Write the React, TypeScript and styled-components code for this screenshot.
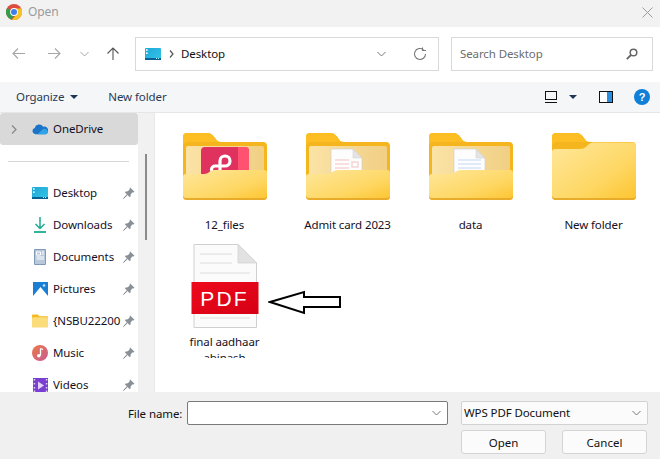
import React from "react";
import styled, { createGlobalStyle } from "styled-components";

const Global = createGlobalStyle`
  html, body { margin: 0; padding: 0; background: #fff; }
  * { box-sizing: border-box; }
  body { font-family: "Noto Sans", "Open Sans", sans-serif; font-size: 11.5px; letter-spacing: -0.1px; color: #111; }
`;
const Dialog = styled.div`
  width: 660px; height: 459px; display: flex; flex-direction: column; overflow: hidden; position: relative;
`;
const TitleBar = styled.header`
  height: 27px; background: #f2f2f2; display: flex; align-items: center; padding: 0 7px 3px 6px; gap: 6px; flex: none;
`;
const Title = styled.span`color: #9a9a9a; font-size: 12px; flex: 1; margin-top: -1px;`;
const NavBar = styled.nav`
  height: 55px; flex: none; display: flex; align-items: flex-start; padding: 10px 7px 0 0; background: #fff;
`;
const NavIcons = styled.div`width: 135px; height: 33px; flex: none; display: flex; align-items: center; padding-left: 12px;`;
const NavIcon = styled.svg<{ $gap: number }>`margin-right: ${p => p.$gap}px; flex: none;`;
const Field = styled.div<{ $grow?: boolean }>`
  height: 34px; border: 1px solid #d9d9d9; display: flex; align-items: center; background: #fff;
  ${p => (p.$grow ? "width: 304px; margin-right: 12px; padding: 0 11px 1px 9px;" : "width: 202px; padding: 0 14px 1px 8px;")}
`;
const Crumb = styled.span`flex: 1; margin-left: 7px; color: #111;`;
const Hint = styled.span`flex: 1; color: #6d6d6d;`;
const ToolBar = styled.div`
  height: 31px; flex: none; background: #f5f6f7; border-bottom: 1px solid #e6e6e6; display: flex; align-items: center; padding: 0 10px 1px 16px;
`;
const ToolButton = styled.span`color: #2a3b55; display: flex; align-items: center; gap: 6px; margin-right: 30px;`;
const Spacer = styled.div`flex: 1;`;
const Caret = styled.i`display: block; width: 0; height: 0; border: 4px solid transparent; border-top: 4px solid #1f3556; border-bottom: 0;`;
const ToolIcon = styled.svg<{ $gap: number }>`margin-right: ${p => p.$gap}px; flex: none;`;
const Main = styled.main`flex: 1; min-height: 0; display: flex; background: #fff;`;
const Sidebar = styled.aside`width: 138px; flex: none; overflow: hidden;`;
const Row = styled.div<{ $active?: boolean }>`
  height: 32px; display: flex; align-items: center; border-radius: 3px;
  background: ${p => (p.$active ? "#d9d9d9" : "transparent")};
  padding-left: ${p => (p.$active ? 11 : 32)}px; padding-right: 3px; flex: none;
`;
const RowIcon = styled.span`width: 16px; height: 16px; flex: none; display: flex; align-items: center; justify-content: center; margin-right: 5px;`;
const RowLabel = styled.span`width: 68px; flex: none; overflow: hidden; white-space: nowrap; color: #15101f; margin-right: 2px; margin-top: -1px;`;
const Rule = styled.div`height: 32px; display: flex; align-items: center; padding: 0 9px 0 8px;`;
const RuleLine = styled.div`height: 1px; width: 100%; background: #d6d6d6;`;
const Gutter = styled.div`width: 17px; flex: none; background: #f1f1f1; border-right: 1px solid #e8e8e8; padding: 41px 0 0 7px;`;
const Thumb = styled.div`width: 2px; height: 86px; background: #8b8b8b;`;
const Files = styled.section`flex: 1; position: relative; display: grid; grid-template-columns: repeat(4, 123px); grid-template-rows: 120px 147px; padding: 0 0 0 8px; overflow: hidden; align-content: start;`;
const Tile = styled.div<{ $doc?: boolean }>`
  display: flex; flex-direction: column; align-items: center; text-align: center; width: 123px; overflow: hidden;
  padding-top: ${p => (p.$doc ? 11 : 20)}px;
  height: ${p => (p.$doc ? 125 : 120)}px;
`;
const TileLabel = styled.div<{ $doc?: boolean }>`
  margin-top: ${p => (p.$doc ? 6 : 17)}px; line-height: 16px; width: ${p => (p.$doc ? 80 : 120)}px; color: #15101f;
`;
const Arrow = styled.svg`position: absolute; left: 113px; top: 177px;`;
const Footer = styled.footer`
  height: 67px; flex: none; background: #f0f0f0; padding: 9px 12px 0 128px; display: grid;
  grid-template-columns: 59px 261px 13px 187px; grid-template-rows: 24px 24px; row-gap: 5px; align-items: center;
`;
const FieldLabel = styled.label`color: #111;`;
const Combo = styled.div<{ $dark?: boolean }>`
  height: 24px; background: ${p => (p.$dark ? "#fff" : "#fbfbfb")}; border: 1px solid ${p => (p.$dark ? "#7a7a7a" : "#d2d2d2")}; border-radius: 2px;
  display: flex; align-items: center; padding: 0 6px 1px 2px; grid-column: ${p => (p.$dark ? 2 : 4)};
`;
const ComboText = styled.span`flex: 1; color: #111;`;
const Buttons = styled.div`grid-column: 4; grid-row: 2; display: flex; justify-content: space-between; padding: 0 1px 0 0;`;
const Button = styled.button`
  width: 85px; height: 24px; border: 1px solid #d4d4d4; border-radius: 3px; background: #fbfbfb; color: #111; font: inherit; padding: 0;
`;

const Chrome = () => (
  <svg width="16" height="16" viewBox="0 0 16 16">
    <circle cx="8" cy="8" r="8" fill="#dd4b3e" />
    <path d="M8 8 1.1 4A8 8 0 0 0 6 15.8L8 8Z" fill="#2f9e4f" />
    <path d="M8 4.5h7.2A8 8 0 0 1 6 15.8l5-6.2L8 8Z" fill="#f7c325" />
    <circle cx="8" cy="8" r="3.9" fill="#fff" />
    <circle cx="8" cy="8" r="3" fill="#3f7ee8" />
  </svg>
);
const DesktopIcon = () => (
  <svg width="16" height="12" viewBox="0 0 16 12">
    <defs><linearGradient id="dk" x1="0" y1="0" x2="1" y2="1"><stop offset="0" stopColor="#1ea7d8" /><stop offset="1" stopColor="#35c6e6" /></linearGradient></defs>
    <rect width="16" height="12" rx="1" fill="url(#dk)" />
    <rect y="10" width="16" height="2" fill="#0a5f93" />
    <rect x="1" y="1.2" width="1.6" height="1.6" fill="#fff" /><rect x="1" y="4.4" width="1.6" height="1.6" fill="#fff" />
    <rect x="11" y="10" width="1" height="1" fill="#bfe9f7" /><rect x="13" y="10" width="1" height="1" fill="#bfe9f7" />
  </svg>
);
const Cloud = () => (
  <svg width="17" height="12" viewBox="0 0 17 12">
    <path d="M3.5 11.5A3.3 3.3 0 0 1 3 5 4.7 4.7 0 0 1 11.8 3.7 3.9 3.9 0 0 1 16.8 8.8c0 1.700-1.200 2.700-2.700 2.700Z" fill="#1c74c9" />
    <path d="M6 11.500 12 5.800a3.900 3.900 0 0 1 4.800 3c0 1.700-1.200 2.700-2.700 2.700Z" fill="#2fa3e6" />
  </svg>
);
const Download = () => (
  <svg width="14" height="16" viewBox="0 0 14 16" fill="none" stroke="#1bab8f" strokeWidth="1.500">
    <path d="M7 0v11M2.500 7 7 11.500 11.500 7" /><path d="M1 15h12" strokeWidth="1.800" />
  </svg>
);
const Documents = () => (
  <svg width="12" height="16" viewBox="0 0 12 16">
    <rect width="12" height="16" rx="1" fill="#7f9ab8" /><rect x="1" y="1" width="10" height="14" fill="#b9c8da" />
    <path d="M2.500 3h4v3h-4ZM8 3h2M8 5h2M2.500 8h7.500M2.500 10h7.500" stroke="#fff" strokeWidth="1" fill="none" />
  </svg>
);
const Pictures = () => (
  <svg width="15" height="14" viewBox="0 0 15 14">
    <rect width="15" height="14" fill="#1a7fd4" />
    <path d="M0 14 7.500 5 15 14Z" fill="#fff" /><circle cx="11" cy="3.500" r="1.300" fill="#bfe3ff" />
  </svg>
);
const SmallFolder = () => (
  <svg width="17" height="14" viewBox="0 0 17 14">
    <path d="M0 1a1 1 0 0 1 1-1h5l2 2h8a1 1 0 0 1 1 1v2H0Z" fill="#f5b81f" />
    <rect y="3" width="17" height="11" rx="1" fill="#fbdc7a" />
  </svg>
);
const Music = () => (
  <svg width="16" height="16" viewBox="0 0 16 16">
    <defs><linearGradient id="mu" x1="0" y1="0" x2="1" y2="1"><stop offset="0" stopColor="#ea7a45" /><stop offset="1" stopColor="#c95a96" /></linearGradient></defs>
    <circle cx="8" cy="8" r="8" fill="url(#mu)" />
    <path d="M8.500 3.500V10.500" stroke="#fff" strokeWidth="1.300" /><path d="M8.500 3.500l2.500 1" stroke="#fff" strokeWidth="1.300" /><circle cx="6.800" cy="10.800" r="1.800" fill="#fff" />
  </svg>
);
const Videos = () => (
  <svg width="15" height="15" viewBox="0 0 15 15">
    <rect width="15" height="15" fill="#7a3fd0" />
    {[1, 5, 9, 12.500].map(y => <g key={y}><rect x="0.700" y={y} width="1.500" height="1.500" fill="#e3d3fb" /><rect x="12.800" y={y} width="1.500" height="1.500" fill="#e3d3fb" /></g>)}
    <path d="M5 3.500v8l6-4Z" fill="#e3d3fb" />
  </svg>
);
const Pin = () => (
  <svg width="12" height="12" viewBox="0 0 12 12" fill="#8b8f96" style={{ flex: "none" }}>
    <path d="M7.200.5 11.500 4.800 10.300 5.600 9.700 5.300 7.700 7.300 7.600 9.500 6.500 10 2 5.500 2.600 4.400 4.800 4.300 6.800 2.300 6.500 1.700Z" />
    <path d="M3.900 7.800.5 11.500 4.200 8.100Z" stroke="#8b8f96" strokeWidth="1" />
  </svg>
);
const Chevron = ({ c = "#777" }: { c?: string }) => (
  <svg width="9" height="6" viewBox="0 0 9 6" fill="none" stroke={c} strokeWidth="1" style={{ flex: "none" }}><path d="M.5 1 4.500 5 8.500 1" /></svg>
);

type FolderKind = "plain" | "wps" | "pink" | "blue";
const Folder = ({ kind, id }: { kind: FolderKind; id: string }) => (
  <svg width="84" height="67" viewBox="0 0 84 67" style={{ flex: "none" }}>
    <defs>
      <linearGradient id={`f${id}`} x1="0" y1="0" x2="1" y2="1"><stop offset="0" stopColor="#ffe79b" /><stop offset="0.600" stopColor="#fed866" /><stop offset="1" stopColor="#fdc42f" /></linearGradient>
      <linearGradient id={`p${id}`} x1="0" y1="0" x2="1" y2="0"><stop offset="0" stopColor="#fbe3a6" /><stop offset="1" stopColor="#f1cf84" /></linearGradient>
    </defs>
    <path d="M0 4a4 4 0 0 1 4-4h20c4 0 6 2 8 5 2 3 3 4 6 4h42a4 4 0 0 1 4 4v50a4 4 0 0 1-4 4H4a4 4 0 0 1-4-4Z" fill="#f5b51e" />
    <path d="M0 4a4 4 0 0 1 4-4h20c4 0 6 2 8 5 2 3 3 4 6 4H3l-3 3Z" fill="#fcbe22" />
    {kind !== "plain" && <path d="M3 15a2 2 0 0 1 2-2h74a2 2 0 0 1 2 2v28H3Z" fill={`url(#p${id})`} />}
    {kind === "wps" && (
      <g>
        <path d="M18 18a4 4 0 0 1 4-4h40a4 4 0 0 1 4 4v26H18Z" fill="#e0325f" />
        <path d="M55 14h7a4 4 0 0 1 4 4v26H55Z" fill="#ff5271" />
        <path d="M37 42V28a5 5 0 0 1 5-5 5 5 0 0 1 5 5 5 5 0 0 1-5 5H32a3.500 3.500 0 0 0-3.500 3.500A3.500 3.500 0 0 0 32 40" fill="none" stroke="#fff" strokeWidth="3.200" />
      </g>
    )}
    {(kind === "pink" || kind === "blue") && (
      <g>
        <path d="M25 16h22l9 9v19H25Z" fill="#fdfdfd" stroke="#cfcfcf" strokeWidth="0.700" />
        <path d="M47 16v9h9Z" fill="#e4e4e4" stroke="#cfcfcf" strokeWidth="0.500" />
        {kind === "pink"
          ? <path d="M29 27h14M29 31h14M29 35h14M46 29h6v5h-6Z" stroke="#f6d4d4" strokeWidth="1.500" fill="none" />
          : <path d="M29 27h23M29 31h23M29 35h23" stroke="#d6e4f6" strokeWidth="1.500" />}
      </g>
    )}
    {kind === "plain"
      ? <path d="M0 19a3 3 0 0 1 3-3h24c4 0 6-1 8-3 2-2 4-3.500 6-3.500h40a3 3 0 0 1 3 3V63a4 4 0 0 1-4 4H4a4 4 0 0 1-4-4Z" fill={`url(#f${id})`} />
      : <path d="M0 44a3 3 0 0 1 3-3h18c3 0 4-1 6-2.500 2-1.500 4-1.500 6-1.500h48a3 3 0 0 1 3 3V63a4 4 0 0 1-4 4H4a4 4 0 0 1-4-4Z" fill={`url(#f${id})`} />}
    <path d="M0 63a4 4 0 0 0 4 4h76a4 4 0 0 0 4-4v-1a3 3 0 0 1-3 3H3a3 3 0 0 1-3-3Z" fill="#e9ab2a" />
  </svg>
);
const PdfIcon = () => (
  <svg width="68" height="84" viewBox="0 0 68 84" style={{ flex: "none" }}>
    <defs><linearGradient id="red" x1="0" y1="0" x2="1" y2="1"><stop offset="0" stopColor="#ee0a1c" /><stop offset="1" stopColor="#d50015" /></linearGradient></defs>
    <path d="M3 .5h44L65.500 19v64.500H3Z" fill="#fbfbfb" stroke="#d0d0d0" />
    <path d="M47 .5V19h18.500Z" fill="#e2e2e2" stroke="#d0d0d0" strokeWidth="0.700" />
    <path d="M9 10h32M9 19h32M9 29h50" stroke="#dcdcdc" />
    <path d="M9 74h50" stroke="#dcdcdc" />
    <rect x="0.500" y="38" width="67" height="32" fill="url(#red)" />
    <text x="33.500" y="62" textAnchor="middle" fill="#fff" fontFamily="Liberation Sans, sans-serif" fontSize="21" letterSpacing="2.200">PDF</text>
  </svg>
);

const places: [string, React.ReactNode][] = [
  ["Desktop", <DesktopIcon />],
  ["Downloads", <Download />],
  ["Documents", <Documents />],
  ["Pictures", <Pictures />],
  ["{NSBU222005", <SmallFolder />],
  ["Music", <Music />],
  ["Videos", <Videos />],
];
const folders: [string, FolderKind][] = [
  ["12_files", "wps"], ["Admit card 2023", "pink"], ["data", "blue"], ["New folder", "plain"],
];

export default function App() {
  return (
    <Dialog>
      <Global />
      <TitleBar>
        <Chrome />
        <Title>Open</Title>
        <svg width="11" height="11" viewBox="0 0 11 11" stroke="#9c9c9c" fill="none"><path d="M.5.5l10 10M10.500.5l-10 10" /></svg>
      </TitleBar>
      <NavBar>
        <NavIcons>
          <NavIcon $gap={23} width="13" height="11" viewBox="0 0 13 11" fill="none" stroke="#a6a6a6" strokeWidth="1.100"><path d="M13 5.500H1M6 .5l-5 5 5 5" /></NavIcon>
          <NavIcon $gap={19} width="13" height="11" viewBox="0 0 13 11" fill="none" stroke="#a6a6a6" strokeWidth="1.100"><path d="M0 5.500h12M7 .5l5 5-5 5" /></NavIcon>
          <NavIcon $gap={18} width="9" height="6" viewBox="0 0 9 6" fill="none" stroke="#a6a6a6"><path d="M.5 1 4.500 5 8.500 1" /></NavIcon>
          <NavIcon $gap={0} width="12" height="13" viewBox="0 0 12 13" fill="none" stroke="#555" strokeWidth="1.100"><path d="M6 13V1M.5 6.500 6 1l5.500 5.500" /></NavIcon>
        </NavIcons>
        <Field $grow>
          <DesktopIcon />
          <svg width="5" height="8" viewBox="0 0 5 8" fill="none" stroke="#555" strokeWidth="1.200" style={{ marginLeft: 8 }}><path d="M1 .5 4 4 1 7.500" /></svg>
          <Crumb>Desktop</Crumb>
          <Chevron />
          <svg width="14" height="14" viewBox="0 0 14 14" fill="none" stroke="#777" strokeWidth="1.100" style={{ marginLeft: 27 }}><path d="M12.500 7A5.500 5.500 0 1 1 10.500 2.700" /><path d="M9.500 .5v3h3.500" /></svg>
        </Field>
        <Field>
          <Hint>Search Desktop</Hint>
          <svg width="12" height="12" viewBox="0 0 12 12" fill="none" stroke="#666"><circle cx="7.500" cy="4.500" r="3.300" strokeWidth="1.500" /><path d="M5 7 .8 11.200" strokeWidth="1.800" /></svg>
        </Field>
      </NavBar>
      <ToolBar>
        <ToolButton>Organize <Caret /></ToolButton>
        <ToolButton>New folder</ToolButton>
        <Spacer />
        <ToolIcon $gap={12} width="12" height="12" viewBox="0 0 12 12" fill="none" stroke="#111"><rect x=".5" y=".5" width="11" height="8" /><path d="M0 11.500h12" /></ToolIcon>
        <ToolIcon $gap={22} width="8" height="4" viewBox="0 0 8 4"><path d="M0 0h8L4 4Z" fill="#1f3556" /></ToolIcon>
        <ToolIcon $gap={21} width="14" height="12" viewBox="0 0 14 12"><rect x=".5" y=".5" width="13" height="11" fill="#fff" stroke="#111" /><rect x="8" y="1" width="5" height="10" fill="#2a8fe0" /></ToolIcon>
        <svg width="16" height="16" viewBox="0 0 16 16"><circle cx="8" cy="8" r="8" fill="#0f7fd8" /><text x="8" y="12" textAnchor="middle" fill="#fff" fontSize="11" fontWeight="700" fontFamily="Liberation Sans, sans-serif">?</text></svg>
      </ToolBar>
      <Main>
        <Sidebar>
          <Row $active>
            <svg width="6" height="9" viewBox="0 0 6 9" fill="none" stroke="#8a8a8a" strokeWidth="1.300" style={{ marginRight: 15 }}><path d="M1 .5 5 4.500 1 8.500" /></svg>
            <RowIcon><Cloud /></RowIcon>
            <RowLabel>OneDrive</RowLabel>
          </Row>
          <Rule><RuleLine /></Rule>
          {places.map(([name, icon]) => (
            <Row key={name}>
              <RowIcon>{icon}</RowIcon>
              <RowLabel>{name}</RowLabel>
              <Pin />
            </Row>
          ))}
        </Sidebar>
        <Gutter><Thumb /></Gutter>
        <Files>
          {folders.map(([name, kind], i) => (
            <Tile key={name}>
              <Folder kind={kind} id={String(i)} />
              <TileLabel>{name}</TileLabel>
            </Tile>
          ))}
          <Tile $doc>
            <PdfIcon />
            <TileLabel $doc>final aadhaar<br />abinash</TileLabel>
          </Tile>
          <Arrow width="74" height="26" viewBox="0 0 74 26" fill="#fff" stroke="#000" strokeWidth="2">
            <path d="M2 12 36 2V7H72V17H36V23Z" />
          </Arrow>
        </Files>
      </Main>
      <Footer>
        <FieldLabel>File name:</FieldLabel>
        <Combo $dark><ComboText /><Chevron /></Combo>
        <Combo><ComboText>WPS PDF Document</ComboText><Chevron /></Combo>
        <Buttons><Button>Open</Button><Button>Cancel</Button></Buttons>
      </Footer>
    </Dialog>
  );
}
